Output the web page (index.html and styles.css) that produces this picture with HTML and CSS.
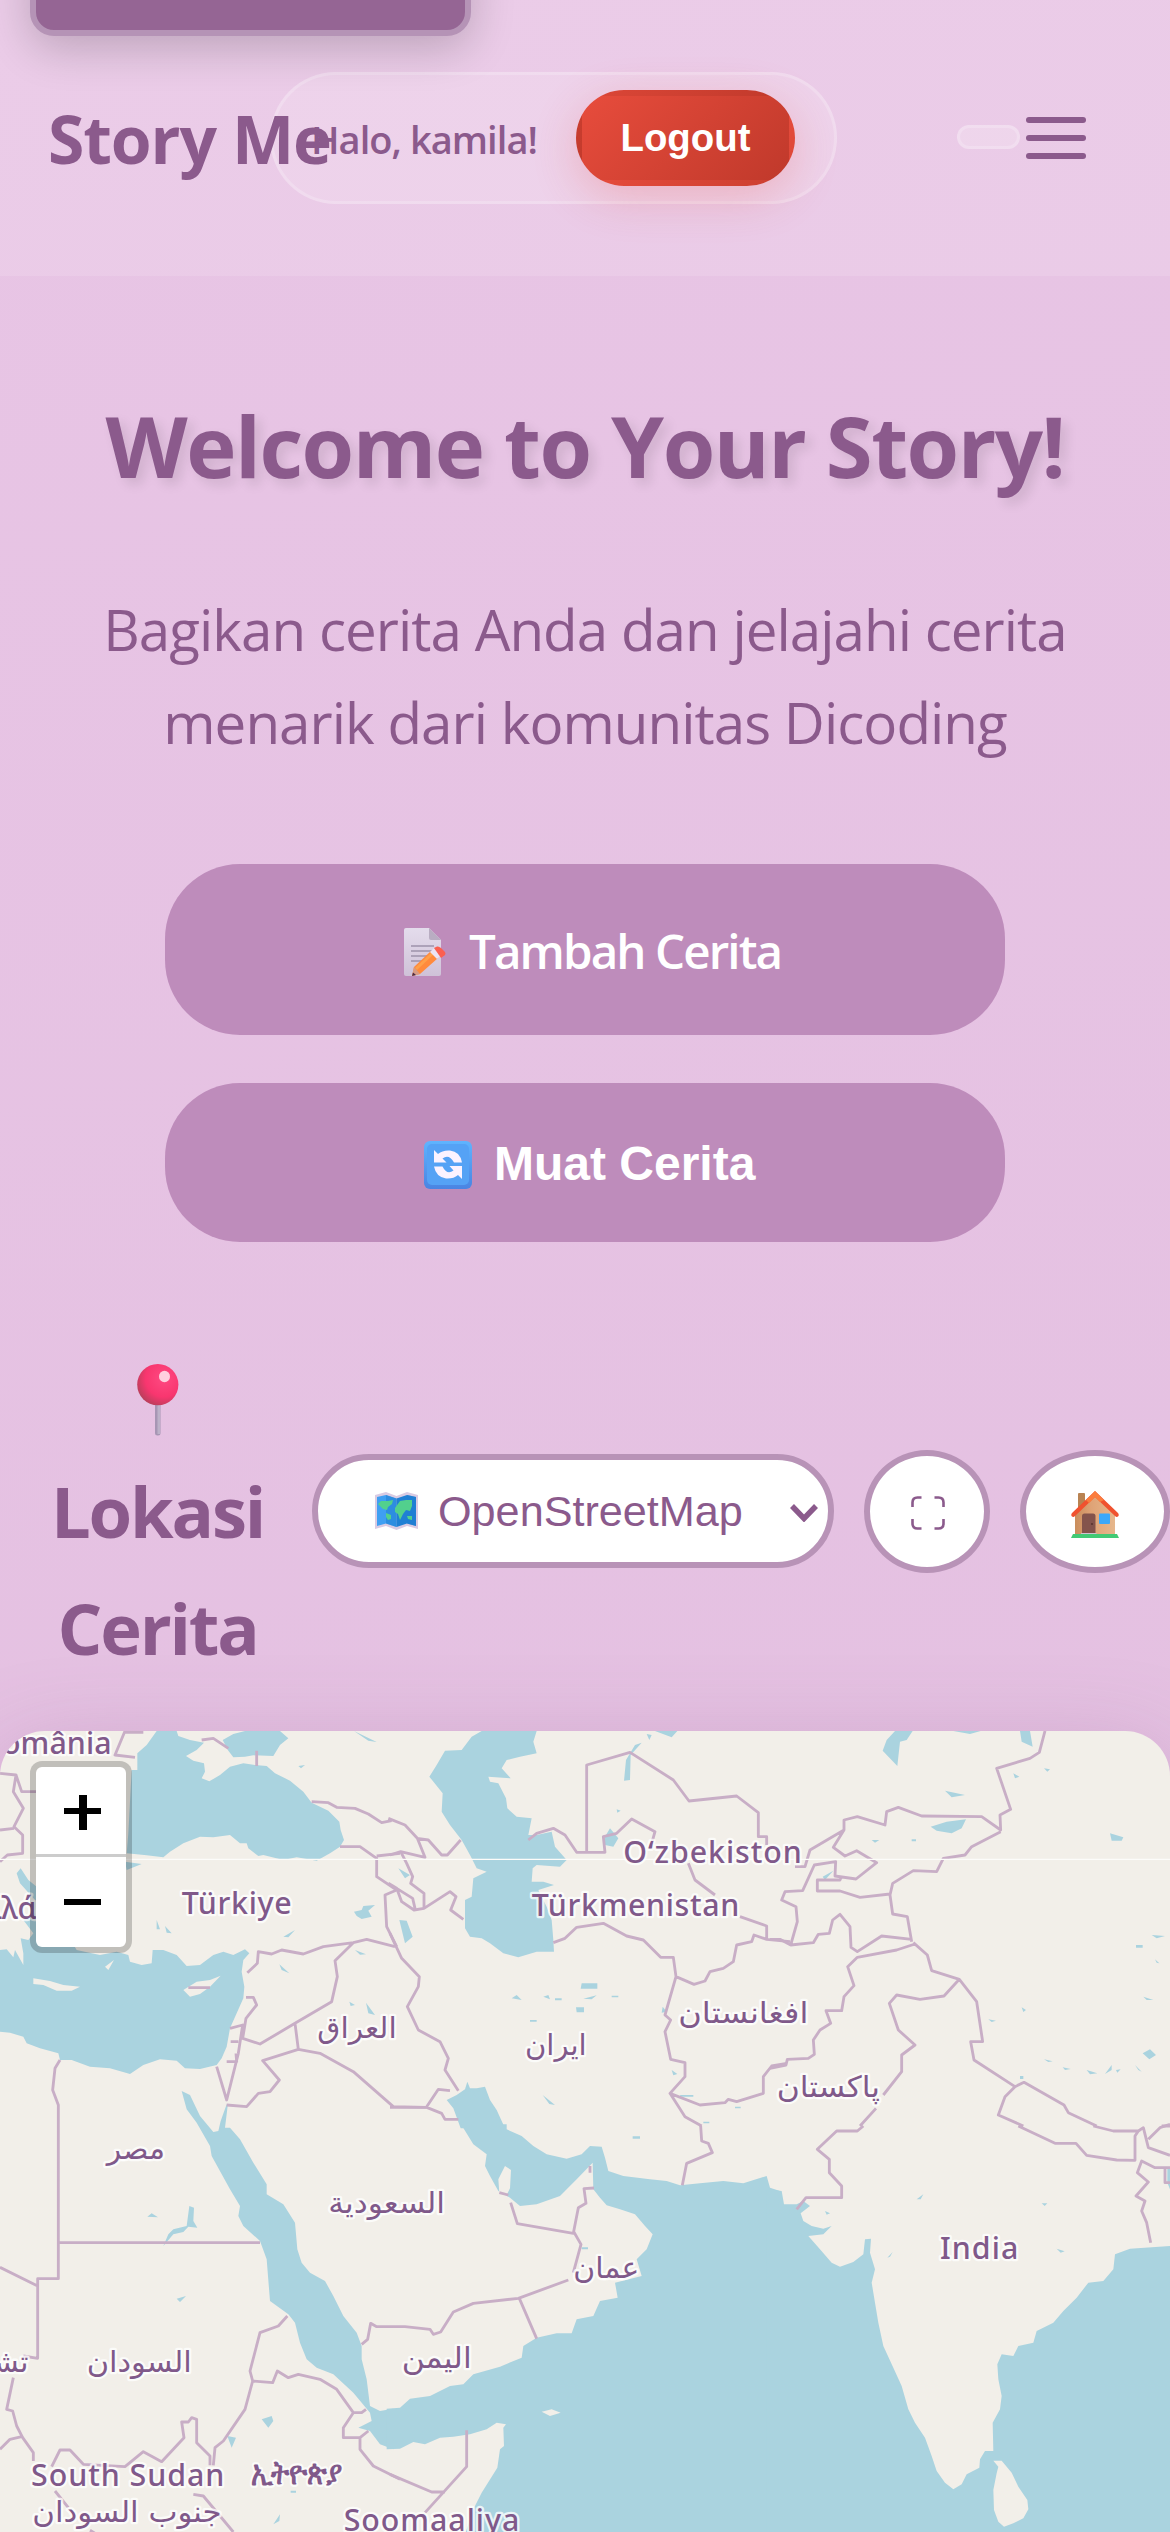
FILE: index.html
```html
<!DOCTYPE html>
<html lang="id">
<head>
<meta charset="utf-8">
<title>Story Me</title>
<link rel="stylesheet" href="styles.css">
</head>
<body>
<a class="skip-link" href="#main"></a>
<header class="header">
  <div class="brand">Story Me</div>
  <div class="user-pill">
    <span class="greeting">Halo, kamila!</span>
    <button class="logout">Logout</button>
  </div>
  <nav class="nav-empty"></nav>
  <button class="burger" aria-label="Menu"><span></span><span></span><span></span></button>
</header>
<main id="main">
  <section class="hero">
    <h1>Welcome to Your Story!</h1>
    <p>Bagikan cerita Anda dan jelajahi cerita<br>menarik dari komunitas Dicoding</p>
    <div class="actions">
      <a class="btn btn-add">
        <svg class="ico-memo" viewBox="0 0 42 48">
          <defs><linearGradient id="pg" x1="0" y1="0" x2="0" y2="1"><stop offset="0" stop-color="#e4dcec"/><stop offset="1" stop-color="#cfc2d8"/></linearGradient></defs>
          <path d="M2 0H25L37 12V46a2 2 0 0 1-2 2H2a2 2 0 0 1-2-2V2a2 2 0 0 1 2-2z" fill="url(#pg)"/>
          <path d="M25 0L37 12H27a2 2 0 0 1-2-2z" fill="#b9adc2"/>
          <path d="M7 18H30M7 23H30M7 28H27M7 33H22" stroke="#9d92aa" stroke-width="1.7"/>
          <path d="M10 39L27 23L34 30L16 46L8 48z" fill="#ff8a3c"/>
          <path d="M12 41L29 25" stroke="#ffa04a" stroke-width="3"/>
          <path d="M26 24L30 20L37 27L33 31z" fill="#ece4f2"/>
          <path d="M30 20L33 18.500Q35 18 37 20L41 24Q42 25.500 41 27L37 30z" fill="#fb5f50"/>
          <path d="M10 39L16 46L8 48z" fill="#d79b83"/><path d="M9 44.500L12 47L8 48z" fill="#4b2a45"/>
        </svg>
        <span>Tambah Cerita</span>
      </a>
      <button class="btn btn-load">
        <svg class="ico-sync" viewBox="0 0 48 48">
          <defs><linearGradient id="sg" x1="0" y1="0" x2="0" y2="1"><stop offset="0" stop-color="#5fb4ff"/><stop offset="1" stop-color="#4a84e2"/></linearGradient></defs>
          <rect width="48" height="48" rx="6" fill="url(#sg)"/><rect x="3" y="3" width="42" height="41" rx="5" fill="#55a2f5"/>
          <path d="M10 9V21.500H22.500L18.500 17.500Q25 12.500 30 21.500H38Q36 10.500 26 9.500Q18.500 9 14 13z" fill="#fbf2ff"/>
          <path d="M38 38V25H25.500L29.500 29.500Q23 34.500 18.500 25.500H10Q12 36 22 37.500Q29.500 38 34 34z" fill="#fbf2ff"/>
        </svg>
        <span>Muat Cerita</span>
      </button>
    </div>
  </section>
  <section class="map-section">
    <div class="map-head">
      <h2>
        <span class="pin-row"><svg class="ico-pin" viewBox="0 0 42 72">
          <defs><radialGradient id="rg" cx=".65" cy=".35" r=".75"><stop offset="0" stop-color="#ff4a82"/><stop offset=".6" stop-color="#f8366f"/><stop offset="1" stop-color="#b04058"/></radialGradient></defs>
          <rect x="18" y="36" width="5.500" height="35.500" rx="2.500" fill="#a796b4"/><rect x="20.500" y="38" width="2.500" height="32" fill="#bdb2c9"/>
          <circle cx="20.800" cy="20.600" r="20.600" fill="url(#rg)"/><ellipse cx="27.500" cy="12.500" rx="5.500" ry="5.800" fill="#ffd0df"/>
        </svg></span>
        Lokasi<br>Cerita
      </h2>
      <div class="select">
        <svg class="ico-map" viewBox="0 0 43 38">
          <path d="M0 3L11 0L21.500 4L32 0L43 3V37L32 34L21.500 38L11 34L0 37z" fill="#d9cbe3"/>
          <path d="M2 5L11 3L21.500 6.500V35L11 31.500L2 34z" fill="#3f9ff2"/><path d="M21.500 6.500L32 3L41 5V34L32 31.500L21.500 35z" fill="#2080d4"/>
          <path d="M11 3L21.500 6.500V35L11 31.500zM32 3L41 5V34L32 31.500z" fill="#1f7ed2" opacity=".55"/>
          <path d="M3 12L6 9L13 9L18 8L17 12L13 15L12 18L8 17zM11 21L16 23L16 27L13 28L11 25zM20 16L25 9L31 8L37 8L37 14L35 19L31 18L28 22L25 28L23 22L20 20zM32 24H37V28L33 27z" fill="#52d08d"/>
        </svg>
        <span>OpenStreetMap</span>
        <svg class="chev" viewBox="0 0 28 19"><path d="M2 3L14 15.500L26 3" fill="none" stroke="#8b5a8c" stroke-width="5.500"/></svg>
      </div>
      <button class="round round-full"><svg viewBox="0 0 34 34"><path d="M1.500 11V6.500Q1.500 1.500 6.500 1.500H10.500M23.500 1.500H27.500Q32.500 1.500 32.500 6.500V11M32.500 23V27.500Q32.500 32.500 27.500 32.500H23.500M10.500 32.500H6.500Q1.500 32.500 1.500 27.500V23" fill="none" stroke="#8b5a8c" stroke-width="2.600"/></svg></button>
      <button class="round round-home"><svg viewBox="0 0 48 47">
        <defs><linearGradient id="wall"><stop offset="0" stop-color="#c98d5c"/><stop offset=".4" stop-color="#dfa376"/><stop offset="1" stop-color="#e6b78c"/></linearGradient></defs>
        <rect x="7" y="2" width="7" height="16" rx="1" fill="#b98352"/>
        <path d="M4 22L24 4L44 22V43H4z" fill="url(#wall)"/>
        <path d="M24 0L47 22Q48.500 24 47 25.500Q45.500 26.500 44 25L24 6L4 25Q2.500 26.500 1 25.500Q-.5 24 1 22z" fill="#f0522f"/>
        <path d="M24 0L33 9L29 11L24 6L18 12L15 9z" fill="#fb7d3e"/>
        <path d="M11 43V25Q11 22.500 13.500 22.500H22Q24.500 22.500 24.500 25V43z" fill="#84544c"/><circle cx="21" cy="33" r="1.100" fill="#5a3430"/>
        <rect x="28" y="22.500" width="11" height="10.500" rx="1" fill="#3ba8fa"/><path d="M10 42H25.500V44H10z" fill="#cfc2d0"/>
        <path d="M2 43H46L48 47H0z" fill="#42ca75"/>
      </svg></button>
    </div>
    <div class="map">
      <svg class="tiles" viewBox="0 33 3510 2403" preserveAspectRatio="none">
        <g class="water">
          <path d="M470 33H530L535 48L570 60L612 68L590 90L558 108L580 122L612 130L615 155L605 175L628 184L660 165L690 140L730 130L765 135L800 138L825 160L870 182L910 215L935 248L985 272L1018 305L1022 330L1032 360L1020 380L990 400L950 422L890 412L850 420L790 405L775 408L745 385L740 370L720 370L690 345L640 352L600 350L550 370L510 395L490 412L440 406L380 400L385 340L395 150L412 150V100L440 75z"/>
          <path d="M735 33H840L865 55L840 75L820 108L760 106L735 110L700 112L685 92L668 60L700 42z"/>
          <path d="M0 690L20 688L40 712L45 690L70 735V700L62 655L85 660L100 640L70 600L105 580V540L60 490L50 460L62 445L85 480L110 500L150 560L200 640L230 690L300 705L350 695L385 705L390 725L425 735L455 730L458 690H490L530 705L560 738L600 735L640 705L670 695L700 705L735 688L748 700L730 720L725 755L733 800L730 835L710 880L690 925L680 980L665 1015L650 1035L600 1047L555 1045L530 1022L480 1018L430 1035L390 1062L330 1045L270 1040L215 1020L180 1020L175 1000L120 985L80 970L70 950L30 938L0 935z"/>
          <path d="M1062 575L1085 570L1090 558L1125 555L1105 572L1115 590L1085 597L1070 588zM1098 848L1125 885L1105 880zM838 733L868 760L845 750zM1065 690L1098 703L1080 704zM850 650L885 630L865 652zM470 600L480 628L470 628zM495 618L515 640L500 638zM375 425L425 432L380 450zM1048 845L1065 855L1052 858zM895 138L915 135L903 145zM1062 33L1130 66L1105 62z"/>
          <g transform="translate(1170 0)">
            <path d="M275 33H440L430 65L440 100L390 110L350 120L335 145L362 175L295 170L300 185L325 190L348 235L352 265L380 290L425 295L415 345L440 345L485 335L495 380L530 420L510 440L440 435L428 445L425 485L460 485L492 495L445 510L470 560L485 600L490 660L492 695L440 695L385 712L340 700L300 670L275 655L240 650L225 625V540L245 530L250 475L290 455L260 445L240 405L215 360L180 315L155 275L158 220L118 170L140 135L165 92L215 90L245 50z"/>
            <path d="M795 33H862L845 52zM735 75L755 68L722 105L720 180L702 182L708 120zM645 350L660 325L685 355L670 380L645 375zM25 445L60 465L45 475zM28 600L50 602L68 650L45 670zM575 790H622V806H572zM365 835L380 825L395 840zM460 830L475 825L480 838zM495 835H515V841H495zM580 836L620 826L605 838zM558 862H582V877H560zM665 827H685V832H665zM420 900H440V905H420zM680 268L692 272L682 278zM845 1050L862 1062L850 1066zM870 1125H910V1130H872zM1035 1160H1052V1165H1035zM940 1205H958V1210H940zM458 1125L495 1155L478 1152zM818 860L830 875L815 878zM770 42L785 45L778 60z"/>
            <path d="M170 1140L200 1125L225 1108L232 1085L240 1105L260 1105L285 1100L300 1140L320 1170L345 1225H212L190 1165z"/>
          </g>
          <g transform="translate(2310 0)">
            <path d="M375 33H428L410 60L390 65L382 138L338 92L350 60zM550 33H632L600 42zM750 33H780L788 80L755 65zM525 212L585 225L545 232zM482 320L530 305L588 298L575 325L545 340L500 332zM158 470L190 452L165 480zM305 360H328L315 368zM730 160L748 170L735 175zM822 145L840 148L832 155zM1020 340L1060 352L1055 362L1025 362zM1145 645L1185 648L1160 655zM1098 675H1118V683H1098zM1118 1000L1140 988L1158 1005L1138 1018zM1005 1062L1025 1035L1025 1050zM950 1050L982 1060L960 1063zM822 1018L848 1024L835 1026zM878 1042L902 1047L885 1050zM1120 830L1150 840L1130 840zM655 898L678 902L665 906zM1155 718L1168 730L1160 728zM1038 1050L1052 1048L1042 1058zM1095 1035L1115 1055L1105 1050zM425 358H438V364H425zM750 1068H760V1077H750zM755 862L768 870L760 876z"/>
          </g>
          <g transform="translate(0 1218)">
            <path d="M545 -105L570 -93L600 -30L640 18L655 15L662 -15L680 -65L683 -60L675 5L690 5L720 40L760 110L800 175V205L850 235L885 290L892 370L905 410L930 440L975 465L1000 510L1030 570L1070 620L1085 660V700L1100 760L1110 840L1140 855L1180 848V970L1140 955L1110 915L1075 905L1115 885L1110 860L1060 800L1000 745L950 725L920 700L900 650L885 590L865 565L810 525L800 400L780 345L730 300L715 270L720 240L690 190L635 90L630 60L590 -10L560 -50z"/>
            <path d="M568 240L582 245L580 285L592 305L565 302L550 318L520 325L490 360L505 325L520 310L560 300zM442 272L455 262L474 274zM530 518L558 510L540 528zM785 880L815 870L820 885L805 905zM682 930L708 935L695 965zM820 1195L840 1165L838 1185zM650 895L660 910zM872 1094H888V1100H872z"/>
          </g>
          <g transform="translate(1170 1218)">
            <path d="M350 -5V10L395 30L430 60L470 85L530 98L575 85L600 60L635 62L645 95L655 135L700 150L780 160L830 165L870 178L930 172L1000 165L1060 172L1130 150L1140 185L1170 195V1225H225L250 1150L275 1100L322 1025L330 970L342 960L340 905L348 895L320 890L290 910L240 925L190 932L150 935L105 955L70 948L30 968L-10 970V848L30 845L60 818L120 810L180 780L220 775L250 745L330 722L395 695L400 660L440 635L500 622L545 622L560 580L610 570L630 525L683 515L675 470L755 450L740 400L770 370L788 325L765 300L735 265L690 250L650 238L630 215L610 190L608 110L560 160L510 210L440 235L390 240L360 215L325 195L300 150L285 120L290 85L250 55L213 -5z"/>
            <path d="M728 31H750V38H728zM575 364H594V370H575z"/>
          </g>
          <g transform="translate(2310 1218)">
            <path d="M-10 190L35 195L42 235L80 235L100 225L120 240L92 262L100 285L125 300L160 308L185 300L160 325L115 330L150 370L185 410L210 422L250 408L280 385L285 340L303 338L300 380L315 430L305 470L315 530L325 590L340 660L370 725L395 780L415 850L435 890L465 935L485 990L500 1035L525 1070L550 1090L575 1075L590 1045L628 1025L630 1000L645 975L670 975L668 890L690 850L695 810L685 760L682 715L695 685L730 690L745 660L790 650L800 615L850 590L880 555L920 515L955 470L1000 465L1030 430L1035 385L1080 368L1200 360V1225H-10z"/>
            <path d="M440 220L460 205L452 220zM165 255L180 262L170 266zM815 232L832 232L824 240zM860 368L884 376L872 380zM352 395L368 378L360 392zM1192 126L1200 125V190L1192 170z"/>
          </g>
        </g>
        <g class="land">
          <path d="M100 775L150 783L190 795L240 800L215 812L170 812L130 795L100 792zM550 810L590 785L630 780L662 767L630 800L600 822L570 830zM315 740L342 720L325 750z"/>
          <path d="M1515 1338L1533 1350L1530 1405L1520 1425L1498 1420L1495 1378zM1625 2075L1655 2068L1682 2078L1650 2088z"/>
          <path d="M2980 2222L3005 2222L3035 2258L3055 2300L3082 2340L3085 2368L3070 2395L3040 2410L3012 2420L2995 2405L2982 2370L2980 2310L2990 2260L2995 2240z"/>
        </g>
        <g class="borders">
          <path d="M375 33L345 105L405 112M375 37H430M605 60L640 55L685 85M770 92V138M0 160L48 165L40 215L70 265L42 320L68 345V400L22 405L0 425M0 330L42 325M48 165L65 215H108M935 245L985 248L1010 262L1065 265L1105 282L1145 308L1175 302M1020 380H1080L1130 415V470L1190 510L1155 525L1160 620L1190 680M1130 408L1200 400M742 758L772 730L775 695L815 702L845 690L910 702L970 680L1060 668L1100 658L1185 680M1060 668L1005 722L1012 770L995 845L885 910L780 972L728 955L738 895L770 855L760 832H738M690 925L728 915L715 1000L680 1140L650 1040M692 965H715M680 1025H710L708 1000M680 1155L740 1160L775 1120L810 1115L838 1080L788 1022L895 988L885 910M895 988L960 1000L1060 1055L1180 1160L1280 1162M180 1020L165 1045L158 1110L175 1155V1676H113V1915L70 1908M175 1568H780M0 1642L113 1698M565 803H630"/>
          <path transform="translate(1170 0)" d="M-5 295L45 315L82 355L115 360L155 405H172L212 360M0 405L32 395L105 412L82 355M32 395L50 430L68 470L62 490L102 520V565L72 570L35 545L20 505L-5 490M102 565L180 515L198 530L182 570L220 598M20 505L68 535L75 565M0 640L35 715L88 770L85 800L52 860L85 930L150 965L175 1015L165 1050L205 1112M415 360L440 340L490 325L525 345L560 397H645L640 350L680 340L725 297L795 335L785 370M590 397V135L720 97L850 180L897 243L1040 228L1105 278V350H1130V375M895 430L915 480L975 525M1050 590L1130 618V655M490 668L525 655L560 622L640 610L710 648L760 660L812 712H850L858 770L912 793L945 783L960 755L1000 745L1030 725L1040 675L1085 665L1092 645L1130 658L1200 665M858 770L825 885L842 900L825 935L842 1018L885 1028V1070L840 1120L930 1155L1005 1148L1015 1138L1040 1145L1120 1120V1070L1145 1038L1190 1030M840 1120L885 1190L935 1218M110 1160L145 1108L180 1112M0 1162H110L155 1180L165 1198H205"/>
          <path transform="translate(2310 0)" d="M825 33L808 97L780 115L680 145L722 268L690 285L692 330L635 290L455 288L385 262L350 275L345 315L262 290L222 300V330L120 390L105 440H75M222 330L190 382L225 408L260 392L320 428L258 477L195 468L197 425L133 435L98 512L45 515L35 540L78 560L82 605L62 675L130 668L145 643L178 640L188 600L210 583L240 620L243 682L262 695L335 648L425 658M692 335L605 380L585 405L520 415L500 455L430 452L368 490L360 525L368 582L412 590L425 665M360 522L270 532L210 513H142V480H210L215 468M0 658H30L62 675M435 672L380 690L262 712L233 740L252 797L222 830L215 872H168L182 910L150 930L130 960L133 1003L115 1015L52 1018L48 1035L0 1045M430 668L472 705L485 752L568 778L620 845L638 965H602L612 1020L735 1100L705 1130L685 1185L760 1218M568 778L522 828L450 838L380 825L358 850L385 930L435 975L395 1005V1055L340 1125M318 1165L270 1218M735 1100L762 1087L882 1155L895 1178L980 1218M1175 1218H1200"/>
          <path transform="translate(0 1218)" d="M40 755L20 850L38 855L50 900L68 935L100 980V1005M0 970L30 940L65 932M155 1022L180 972H210L250 1015L375 1022L430 977L485 1007L552 935L545 888H565L575 875L590 880V950L630 990V1018M640 1018L645 965L670 945L735 850L758 765L750 735L780 620L835 600L862 570M758 765L818 770L832 735L865 755L895 745L960 760L1010 790L1060 860H1085L1098 850M1060 860L1030 905V935H1080L1105 915M1080 935V970L1120 1020L1200 1060M1085 655L1103 640L1112 592L1130 602H1215L1290 610L1300 625L1322 618L1360 558L1420 532L1555 517L1705 462M580 1105L610 1110L700 1218M165 1095L205 1145M270 1213L290 1225"/>
          <path transform="translate(1170 1218)" d="M328 200L355 207M362 230L382 293L550 322L565 245L588 232L582 188L612 186M600 120V140M550 315L573 355L550 440M388 517L440 638M230 913V1022L105 1160M0 1045L125 1098H165M932 0L935 45L955 52L967 80L890 112L877 178"/>
          <path transform="translate(2310 1218)" d="M280 0L262 15H200L142 70L178 100V140L215 180V215H108L80 250M745 0L855 52H918L950 88L1040 102L1095 103V30L1105 15H1030L970 0M1105 15L1120 5L1135 65L1200 88M1135 40L1170 5L1200 -5M1200 125H1155L1115 105L1102 140L1135 168L1098 210L1125 225L1115 255L1130 290L1142 350M1185 125V170H1200"/>
        </g>
        <path class="seam" d="M0 418H3510"/>
        <g class="labels">
          <text x="-52" y="103" textLength="387">România</text>
          <text x="-95" y="597">Ελλάδα</text>
          <text x="545" y="583" textLength="330">Türkiye</text>
          <text x="1870" y="428" textLength="535">O‘zbekiston</text>
          <text x="1595" y="588" textLength="623">Türkmenistan</text>
          <text x="2820" y="1616" textLength="235">India</text>
          <text x="93" y="2298" textLength="580">South Sudan</text>
          <text x="1031" y="2434" textLength="527">Soomaaliya</text>
          <text class="ethiopic" x="752" y="2293" textLength="276" lengthAdjust="spacingAndGlyphs">ኢትዮጵያ</text>
          <g class="arabic">
            <text x="952" y="955" textLength="238" lengthAdjust="spacingAndGlyphs">العراق</text>
            <text x="2035" y="908" textLength="390" lengthAdjust="spacingAndGlyphs">افغانستان</text>
            <text x="1575" y="1006" textLength="185" lengthAdjust="spacingAndGlyphs">ایران</text>
            <text x="2330" y="1130" textLength="310" lengthAdjust="spacingAndGlyphs">پاکستان</text>
            <text x="320" y="1318" textLength="175" lengthAdjust="spacingAndGlyphs">مصر</text>
            <text x="985" y="1480" textLength="350" lengthAdjust="spacingAndGlyphs">السعودية</text>
            <text x="1720" y="1673" textLength="198" lengthAdjust="spacingAndGlyphs">عمان</text>
            <text x="1205" y="1943" textLength="210" lengthAdjust="spacingAndGlyphs">اليمن</text>
            <text x="260" y="1956" textLength="315" lengthAdjust="spacingAndGlyphs">السودان</text>
            <text x="85" y="1956" text-anchor="end">تشاد</text>
            <text x="97" y="2406" textLength="568" lengthAdjust="spacingAndGlyphs">جنوب السودان</text>
          </g>
        </g>
      </svg>
      <div class="zoom">
        <button class="zoom-btn" aria-label="Zoom in"><i class="bar"></i><i class="bar up"></i></button>
        <button class="zoom-btn" aria-label="Zoom out"><i class="bar"></i></button>
      </div>
    </div>
  </section>
</main>
</body>
</html>
```
FILE: styles.css
```css
* { box-sizing: border-box; }
html { height: 2532px; overflow: hidden; }
body {
  margin: 0;
  height: 2532px;
  overflow: hidden;
  position: relative;
  font-family: "Open Sans", "Noto Sans", sans-serif;
  color: #8b5a8c;
  background: linear-gradient(170deg, #e8c5e5 0%, #e3bfe0 100%);
}
button { margin: 0; padding: 0; border: 0; background: none; font: inherit; color: inherit; }
svg { display: block; }

.skip-link {
  position: absolute;
  top: -90px;
  left: 30px;
  width: 441px;
  height: 126px;
  border: 6px solid #b593b6;
  border-radius: 24px;
  background: #956594;
  box-shadow: 0 12px 45px rgba(0, 0, 0, .2);
  z-index: 3;
}

.header {
  display: flex;
  align-items: center;
  height: 276px;
  padding-left: 48px;
  background: rgba(255, 255, 255, .13);
}
.brand {
  width: 222px;
  font-size: 66px;
  font-weight: 700;
  line-height: 108px;
  letter-spacing: -1.1px;
  white-space: nowrap;
  position: relative;
  z-index: 1;
}
.user-pill {
  display: flex;
  align-items: center;
  justify-content: space-between;
  width: 567px;
  height: 132px;
  padding: 0 39px 0 38px;
  border: 3px solid rgba(255, 255, 255, .2);
  border-radius: 66px;
  background: rgba(255, 255, 255, .15);
}
.greeting { padding-top: 1px; font-size: 38px; font-weight: 600; letter-spacing: -.95px; white-space: nowrap; }
.logout {
  width: 219px;
  height: 96px;
  border: 6px solid transparent;
  border-radius: 48px;
  background: linear-gradient(135deg, #e74c3c, #c0392b);
  box-shadow: 0 12px 45px rgba(231, 76, 60, .24);
  color: #fff;
  font: 700 38.4px "Liberation Sans", Arial, sans-serif;
}
.nav-empty {
  width: 63px;
  height: 24px;
  margin: -2px 6px 0 120px;
  border: 3px solid rgba(255, 255, 255, .2);
  border-radius: 12px;
  background: rgba(255, 255, 255, .2);
}
.burger { display: flex; flex-direction: column; gap: 12px; width: 60px; }
.burger span { height: 6px; border-radius: 3px; background: #8b5a8c; }

.hero { padding-top: 100px; text-align: center; }
h1 {
  margin: 0 0 69px;
  font-size: 85px;
  line-height: 138px;
  font-weight: 700;
  letter-spacing: -1.5px;
  white-space: nowrap;
  text-shadow: 6px 6px 12px rgba(0, 0, 0, .1);
}
.hero p { margin: 0 0 95px; font-size: 56.5px; line-height: 93px; letter-spacing: -.95px; white-space: nowrap; }
.actions { display: flex; flex-direction: column; align-items: center; gap: 48px; }
.btn {
  display: flex;
  align-items: center;
  width: 840px;
  border-radius: 75px;
  background: #be8cbb;
  color: #fff;
  font-size: 47.5px;
  font-weight: 600;
}
.btn span { padding-top: 2px; white-space: nowrap; }
.btn-add { height: 171px; padding-left: 239px; gap: 23px; letter-spacing: -1.9px; }
.btn-load { height: 159px; padding-left: 259px; gap: 22px; font: 700 48px "Liberation Sans", Arial, sans-serif; }
.ico-memo { width: 42px; height: 48px; margin-top: 4px; }
.ico-sync { width: 48px; height: 48px; margin-top: 4px; }

.map-head {
  display: flex;
  align-items: center;
  height: 348px;
  margin-top: 95px;
  margin-bottom: 46px;
  padding-left: 48px;
}
h2 {
  margin: 0 45px 0 0;
  width: 219px;
  text-align: center;
  font-size: 70.5px;
  line-height: 117px;
  font-weight: 700;
  letter-spacing: -2.2px;
}
.pin-row { display: flex; justify-content: center; height: 117px; padding-top: 28px; }
.ico-pin { width: 42px; height: 72px; }
.select {
  display: flex;
  align-items: center;
  width: 522px;
  height: 114px;
  margin-right: 30px;
  padding-left: 57px;
  border: 6px solid #b893b7;
  border-radius: 57px;
  background: #fff;
  font: 43.2px "Liberation Sans", Arial, sans-serif;
}
.ico-map { width: 43px; height: 38px; margin-right: 20px; }
.chev { width: 28px; height: 19px; margin: 2px 10px 0 auto; }
.round {
  display: flex;
  align-items: center;
  justify-content: center;
  flex: none;
  height: 123px;
  border: 6px solid #b893b7;
  border-radius: 50%;
  background: #fff;
}
.round-full { width: 126px; margin-right: 30px; }
.round-full svg { width: 34px; height: 34px; margin: 4px 0 0 2px; }
.round-home { width: 150px; }
.round-home svg { width: 48px; height: 47px; margin-top: 7px; }

.map {
  position: relative;
  height: 801px;
  border-radius: 45px 45px 0 0;
  background: #f2efe9;
  box-shadow: 0 24px 96px rgba(139, 90, 140, .3);
}
.tiles { width: 1170px; height: 801px; border-radius: 45px 45px 0 0; }
.water { fill: #aad3df; }
.land { fill: #f2efe9; }
.borders { fill: none; stroke: #c8aec6; stroke-width: 8.5; stroke-linejoin: round; }
.seam { stroke: #fcfcfa; stroke-width: 4; }
.labels {
  fill: #80598a;
  font: 500 91px "Noto Sans", "Open Sans", sans-serif;
  paint-order: stroke;
  stroke: rgba(255, 255, 255, .75);
  stroke-width: 14;
  stroke-linejoin: round;
}
.ethiopic { font-size: 100px; font-weight: 700; }
.arabic { font-family: "DejaVu Sans", sans-serif; font-size: 88px; }
.zoom {
  position: absolute;
  left: 30px;
  top: 30px;
  width: 102px;
  height: 192px;
  border: 6px solid rgba(0, 0, 0, .2);
  border-radius: 12px;
  background: #fff;
  background-clip: padding-box;
}
.zoom-btn { position: relative; display: flex; align-items: center; justify-content: center; width: 90px; height: 90px; padding-left: 3px; }
.zoom-btn:first-child { border-bottom: 3px solid #ccc; }
.bar { width: 37px; height: 6px; background: #000; }
.up { position: absolute; left: 43px; top: 28px; width: 8px; height: 35px; }
```
